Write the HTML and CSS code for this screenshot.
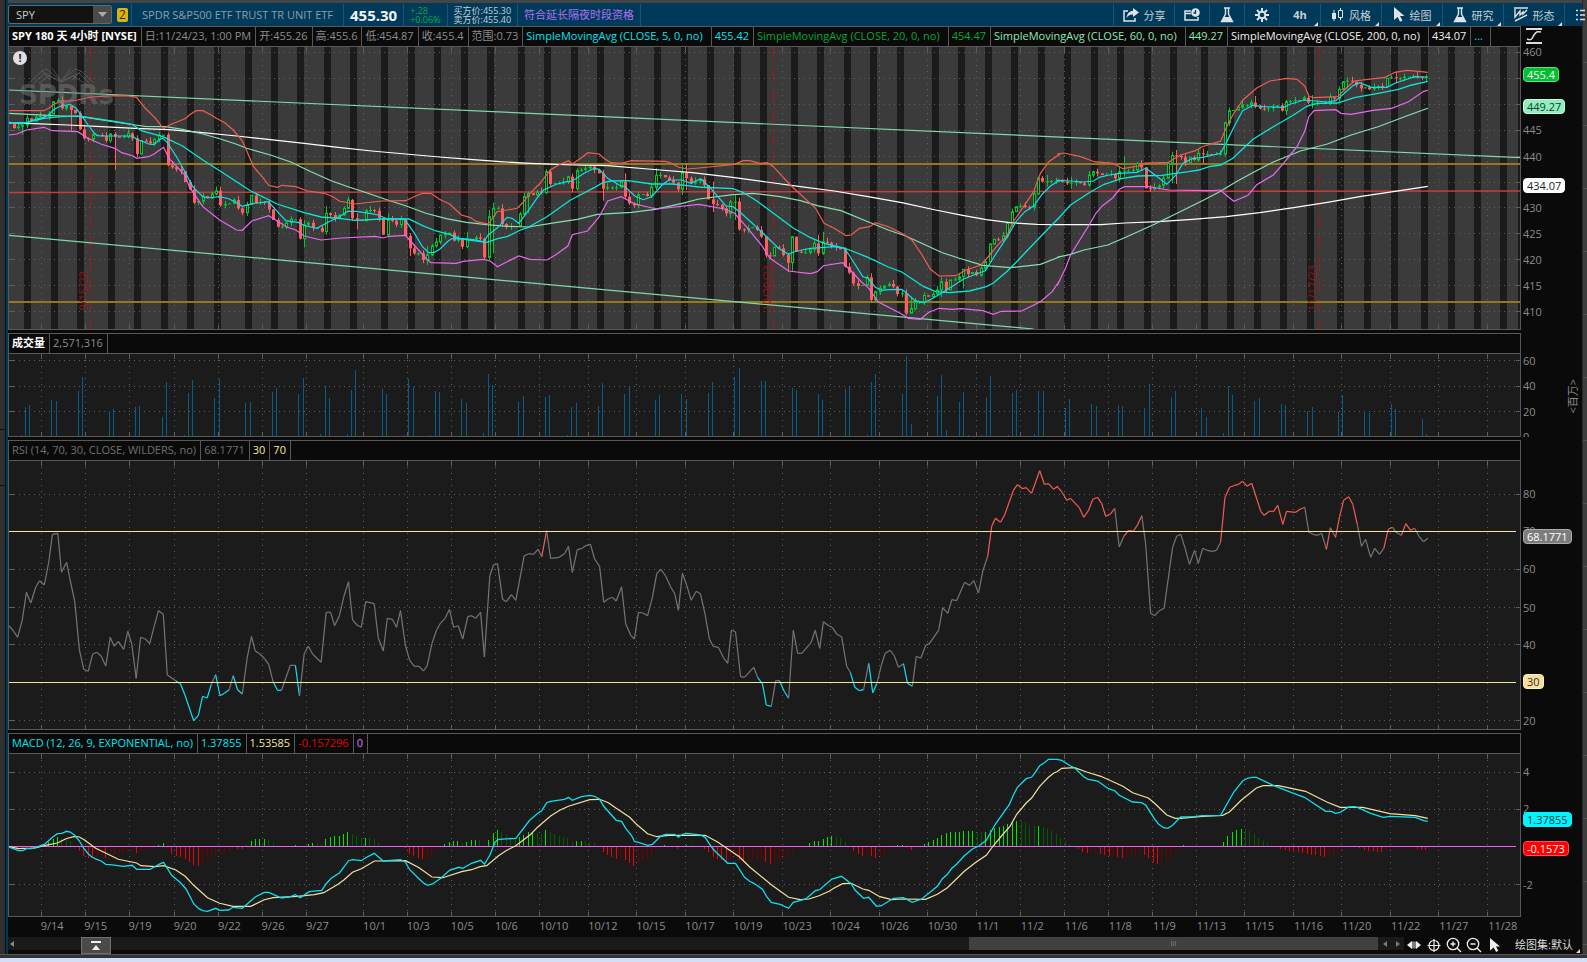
FILE: index.html
```html
<!DOCTYPE html>
<html lang="zh-CN">
<head>
<meta charset="utf-8">
<title>SPY 180 天 4小时</title>
<link rel="stylesheet" href="styles.css">
</head>
<body>
<div class="app">
  <div class="shell">
    <aside class="rail-left"><span class="rail-grip"></span></aside>
    <main class="main">
      <div class="tabline"></div>
      <header class="toolbar">
        <div class="symbol">
          <input class="symbol-input" type="text" value="SPY" aria-label="代码">
          <button class="symbol-drop" aria-label="选择代码"><svg width="9" height="5" viewBox="0 0 9 5"><path d="M0 0h9L4.500 5z" fill="#aaa"/></svg></button>
        </div>
        <button class="link-badge" aria-label="链接 2">2</button>
        <div class="info name">SPDR S&amp;P500 ETF TRUST TR UNIT ETF</div>
        <div class="info last">455.30</div>
        <div class="info change"><span>+.28</span><span>+0.06%</span></div>
        <div class="info quote"><span>买方价:455.30</span><span>卖方价:455.40</span></div>
        <div class="info overnight">符合延长隔夜时段资格</div>
        <nav class="tools">
          <button class="tool wide"><svg width="16" height="14" viewBox="0 0 16 14"><path d="M5 3H1v10h11v-3" fill="none" stroke="#dde3e6" stroke-width="1.500"/><path d="M10 0l6 4.500L10 9V6.500C7 6.300 5 7.500 3.500 10 4 6 6 3 10 2.700z" fill="#dde3e6"/></svg>分享</button>
          <button class="tool" aria-label="日历"><svg width="16" height="14" viewBox="0 0 16 14"><path d="M7 3H1v9h13V9M1 5.500h6" fill="none" stroke="#dde3e6" stroke-width="1.500"/><circle cx="11.500" cy="4.500" r="4.300" fill="#dde3e6"/><path d="M11.500 2v3h-2" fill="none" stroke="#003a5a" stroke-width="1.300"/></svg></button>
          <button class="tool" aria-label="实验"><svg width="14" height="16" viewBox="0 0 14 16"><path d="M4 1h6M5.500 1v6L1.500 14.500h11L8.500 7V1" fill="none" stroke="#dde3e6" stroke-width="1.400"/><path d="M4 10h6l2.500 5h-11z" fill="#dde3e6"/></svg></button>
          <button class="tool" aria-label="设置"><svg width="14" height="14" viewBox="0 0 14 14"><circle cx="7" cy="7" r="3.300" fill="none" stroke="#dde3e6" stroke-width="2"/><path d="M7 0v3M7 11v3M0 7h3M11 7h3M2 2l2.200 2.200M9.800 9.800L12 12M12 2L9.800 4.200M4.200 9.800L2 12" stroke="#dde3e6" stroke-width="2"/></svg></button>
          <button class="tool period corner">4h</button>
          <button class="tool wide corner"><svg width="13" height="14" viewBox="0 0 13 14"><path d="M3 2v11M9.500 0v12" stroke="#dde3e6"/><path d="M1 5h4v6H1z" fill="#dde3e6"/><path d="M7.500 2.500h4v7h-4z" fill="#003a5a" stroke="#dde3e6"/></svg>风格</button>
          <button class="tool wide corner"><svg width="12" height="15" viewBox="0 0 12 15"><path d="M1 0l10.500 9H7l2.500 4.500-2.500 1.300L4.700 10 1 13z" fill="#dde3e6"/></svg>绘图</button>
          <button class="tool wide corner"><svg width="14" height="16" viewBox="0 0 14 16"><path d="M4 1h6M5.500 1v6L1.500 14.500h11L8.500 7V1" fill="none" stroke="#dde3e6" stroke-width="1.400"/><path d="M4 10h6l2.500 5h-11z" fill="#dde3e6"/></svg>研究</button>
          <button class="tool wide corner"><svg width="14" height="15" viewBox="0 0 14 15"><path d="M0 1h14M1 2v8l5-6v4l3-3v2l4-4M1 14l12-6" fill="none" stroke="#dde3e6" stroke-width="1.400"/></svg>形态</button>
          <button class="tool last-tool" aria-label="列表"><svg width="9" height="12" viewBox="0 0 9 12"><path d="M0 1.500h2M4 1.500h5M0 6h2M4 6h5M0 10.500h2M4 10.500h5" stroke="#dde3e6" stroke-width="1.500"/></svg></button>
        </nav>
      </header>

      <div class="charts">
        <section class="panel price">
          <div class="legend">
            <span class="title">SPY 180 天 4小时 [NYSE]</span><span>日:11/24/23, 1:00 PM</span><span>开:455.26</span><span>高:455.6</span><span>低:454.87</span><span>收:455.4</span><span>范围:0.73</span><span class="study cyan">SimpleMovingAvg (CLOSE, 5, 0, no)</span><span class="cyan">455.42</span><span class="study green">SimpleMovingAvg (CLOSE, 20, 0, no)</span><span class="green">454.47</span><span class="study mint">SimpleMovingAvg (CLOSE, 60, 0, no)</span><span class="mint">449.27</span><span class="study white">SimpleMovingAvg (CLOSE, 200, 0, no)</span><span class="white">434.07</span><span class="cyan more">...</span>
          </div>
          <div class="axis-head"><svg width="16" height="18" viewBox="0 0 16 18"><path d="M0 2h16M0 16h16" stroke="#ddd" stroke-width="2"/><path d="M1 12c5 2 5-1 7-4s3-4 7-3" fill="none" stroke="#ddd" stroke-width="1.500"/></svg></div>
          <div class="plot" id="plot-price">
            <div class="watermark">
              <svg width="66" height="16" viewBox="0 0 66 16" fill="none" stroke="#777"><path d="M0 15L13 3l5-2 14 12L46 1l6 2 13 12M5 15L16 5l16 9L50 5l10 10M10 15l10-7 12 6 12-6 11 7M13 3l8 9M52 3l-9 9M23 0l9 13L42 0"/></svg>
              <span>SPDRs</span>
            </div>
            <span class="alert">!</span>
          </div>
          <div class="axis" id="axis-price"></div>
        </section>
        <section class="panel volume">
          <div class="legend"><span class="title">成交量</span><span>2,571,316</span></div>
          <div class="axis-head"></div>
          <div class="plot" id="plot-volume"></div>
          <div class="axis" id="axis-volume"><span class="unit">&lt;百万&gt;</span></div>
        </section>
        <section class="panel rsi">
          <div class="legend"><span class="dim">RSI (14, 70, 30, CLOSE, WILDERS, no)</span><span class="dim">68.1771</span><span class="cream">30</span><span class="cream">70</span></div>
          <div class="axis-head"></div>
          <div class="plot" id="plot-rsi"></div>
          <div class="axis" id="axis-rsi"></div>
        </section>
        <section class="panel macd">
          <div class="legend"><span class="cyan">MACD (12, 26, 9, EXPONENTIAL, no)</span><span class="cyan">1.37855</span><span class="cream">1.53585</span><span class="red">-0.157296</span><span class="violet">0</span></div>
          <div class="axis-head"></div>
          <div class="plot" id="plot-macd"></div>
          <div class="axis" id="axis-macd"></div>
        </section>
      </div>
      <div class="dates" id="dates"></div>
      <footer class="bottom">
        <div class="track">
          <button class="arrow-start" aria-label="向左"><svg width="4" height="6" viewBox="0 0 4 6"><path d="M4 0v6L0 3z" fill="#888"/></svg></button>
          <button class="expand" aria-label="展开"><svg width="10" height="10" viewBox="0 0 10 10"><path d="M0 0h10v2H0zM5 4l4 5H1z" fill="#eee"/></svg></button>
          <span class="gap"></span>
          <span class="thumb">III</span>
          <button class="step" aria-label="上一页"><svg width="4" height="6" viewBox="0 0 4 6"><path d="M4 0v6L0 3z" fill="#777"/></svg></button>
          <button class="step" aria-label="下一页"><svg width="4" height="6" viewBox="0 0 4 6"><path d="M0 0v6l4-3z" fill="#777"/></svg></button>
        </div>
        <div class="zoomers">
          <button aria-label="平移"><svg width="16" height="16" viewBox="0 0 16 16"><path d="M1 8l5-4v8zM15 8l-5-4v8z" fill="#eee"/><path d="M7 4.500v7M9 4.500v7" stroke="#eee"/></svg></button>
          <button aria-label="十字线"><svg width="16" height="16" viewBox="0 0 16 16"><circle cx="8" cy="8.500" r="5" fill="none" stroke="#eee" stroke-width="1.200"/><path d="M8 2v13M1.500 8.500h13" stroke="#eee" stroke-width="1.200"/></svg></button>
          <button aria-label="放大"><svg width="16" height="16" viewBox="0 0 16 16"><circle cx="7" cy="7" r="5.700" fill="none" stroke="#eee" stroke-width="1.300"/><path d="M4.500 7h5M7 4.500v5M11 11l4 4" stroke="#eee" stroke-width="1.400"/></svg></button>
          <button aria-label="缩小"><svg width="16" height="16" viewBox="0 0 16 16"><circle cx="7" cy="7" r="5.700" fill="none" stroke="#eee" stroke-width="1.300"/><path d="M4.500 7h5M11 11l4 4" stroke="#eee" stroke-width="1.400"/></svg></button>
          <button aria-label="指针"><svg width="16" height="16" viewBox="0 0 16 16"><path d="M4 1l10 8.500H10l2.300 4.200-2.200 1.200L7.700 10.500 4 13.500z" fill="#eee"/></svg></button>
          <button class="drawset corner">绘图集:默认</button>
        </div>
      </footer>
    </main>
    <aside class="rail-right"></aside>
  </div>
  <div class="sill"></div>
</div>
<script src="chart.js"></script>
</body>
</html>
```
FILE: styles.css
```css
* { box-sizing: border-box; }

body {
  margin: 0;
  background: #0a0a0a;
  color: #8c8c8c;
  font-family: "Open Sans", "Noto Sans", "Noto Sans CJK SC", sans-serif;
  font-size: 11px;
}

button, input { font: inherit; color: inherit; margin: 0; padding: 0; border: 0; background: none; }
button { display: flex; align-items: center; justify-content: center; }
svg { display: block; flex: none; }

.app { display: flex; flex-direction: column; min-height: 100vh; }
.shell { flex: 1; display: flex; border-bottom: 1px solid #555; }
.sill { height: 7px; background: #333; border-bottom: 4px solid #d3def5; }

.rail-left { width: 8px; background: #303030; border-right: 2px solid #003a5a; box-shadow: inset -1px 0 #0a0a0a; display: flex; align-items: center; }
.rail-grip { width: 5px; height: 57px; border-top: 1px solid #111; border-bottom: 1px solid #111; margin-bottom: 40px; }
.rail-right { width: 5px; background: repeating-linear-gradient(#3c3c3c 0 62px, #555 62px 63px); border-left: 1px solid #2a2a2a; }

.main { flex: 1; min-width: 0; display: flex; flex-direction: column; }
.tabline { height: 3px; background: #454545; }

.toolbar { height: 23px; display: flex; align-items: center; background: #003a5a; white-space: nowrap; overflow: hidden; margin-right: -5px; }
.symbol { width: 104px; height: 19px; display: flex; background: #121212; border: 1px solid #666; border-radius: 2px; }
.symbol-input { flex: 1; min-width: 0; padding-left: 7px; color: #ccc; }
.symbol-drop { width: 18px; background: #4a4a4a; }
.link-badge { width: 11px; height: 14px; margin: 0 3px 0 5px; background: #dcb410; color: #3a2e00; font-size: 12px; border-radius: 2px; }
.info { height: 22px; display: flex; flex-direction: column; justify-content: center; padding: 0 6px; border-right: 1px solid #1b5576; line-height: 10px; }
.name { padding: 0 10px; border-left: 1px solid #1b5576; color: #8f9ea8; }
.last { color: #f2f2f2; font-size: 15px; font-weight: 700; }
.change { color: #00b040; font-size: 9px; line-height: 9px; }
.quote { color: #c8d0d4; font-size: 9px; line-height: 9px; }
.overnight { color: #b070f0; }

.tools { display: flex; margin-left: auto; }
.tool { position: relative; width: 35px; height: 22px; gap: 5px; border-left: 1px solid #1b5576; color: #c8d0d4; }
.wide { width: 61px; }
.period { width: 41px; font-weight: 700; }
.last-tool { width: 23px; padding-right: 2px; justify-content: flex-end; }
.corner { position: relative; }
.corner::after { content: ""; position: absolute; right: 2px; bottom: 0; border: 2px solid; border-color: transparent #ddd #ddd transparent; }

.charts { flex: 1; display: flex; flex-direction: column; gap: 3px; }
.panel { display: grid; grid-template-columns: minmax(0, 1fr) 61px; grid-template-rows: 21px minmax(40px, 1fr); }
.price { flex: 282 1 22px; }
.volume { flex: 82 1 22px; }
.rsi { flex: 268 1 22px; }
.macd { flex: 162 1 22px; }

.legend { display: flex; border: 1px solid #585858; white-space: nowrap; overflow: hidden; line-height: 18px; }
.legend span { padding: 0 4px 0 3px; border-right: 1px solid #585858; }
.legend .study { padding-right: 8px; }
.legend .more { padding-right: 7px; }
.legend .title { color: #fff; font-weight: 700; }
.cyan { color: #00e5f0; }
.green { color: #00a838; }
.mint { color: #8fe8b4; }
.white { color: #eee; }
.cream { color: #f5e6a0; }
.red { color: #e60000; }
.violet { color: #e070ff; }
.dim { color: #707070; }
.axis-head { padding: 1px 0 0 5px; }

.plot { position: relative; border: 1px solid #585858; border-top: 0; background: #1b1b1b; overflow: hidden; }
.plot > svg { position: absolute; inset: 0; width: 100%; height: 100%; }
.watermark { position: absolute; z-index: 1; left: 10px; top: 21px; color: #777; opacity: 0.5; }
.watermark svg { margin-left: 10px; }
.watermark span { display: block; font: 700 26px/22px "DejaVu Sans", sans-serif; }
.alert { position: absolute; z-index: 2; left: 4px; top: 4px; width: 14px; height: 14px; border-radius: 50%; background: #e0e0e0; color: #222; font-weight: 700; line-height: 14px; text-align: center; }
.expiry { position: absolute; z-index: 1; bottom: 18px; color: #9c1010; writing-mode: vertical-rl; transform: translateX(-100%) rotate(180deg); line-height: 14px; }

.axis { position: relative; }
.volume .axis { overflow: hidden; }
.axis-label { position: absolute; left: 2px; height: 14px; line-height: 14px; margin-top: -8px; }
.marker { padding: 0 3px; height: 15px; line-height: 13px; border: 1px solid; border-radius: 4px; z-index: 1; }
.marker.up { background: #00c030; border-color: #60e080; color: #fff; }
.marker.avg { background: #90eec0; border-color: #b8ffdc; color: #17402c; }
.marker.long { background: #fff; border-color: #fff; color: #222; }
.marker.grey { background: #7c7c7c; border-color: #aaa; color: #fff; }
.marker.band { background: #f5dfa0; border-color: #fff0c0; color: #3c3418; }
.marker.aqua { background: #00f5ff; border-color: #00f5ff; color: #003c40; }
.marker.loss { background: #ff0000; border-color: #ff5050; color: #fff; }
.unit { position: absolute; right: 2px; top: 25px; writing-mode: vertical-rl; text-orientation: sideways; transform: rotate(180deg); line-height: 14px; }

.dates { position: relative; height: 20px; margin: 0 61px 0 0; line-height: 18px; }
.dates span { position: absolute; }

.bottom { height: 17px; display: flex; align-items: flex-start; }
.track { flex: 1; height: 13px; display: flex; background: #1a1a1a; }
.arrow-start { width: 73px; justify-content: flex-start; padding-left: 2px; }
.expand { width: 30px; height: 17px; background: #4a4a4a; border: 1px solid #707070; }
.gap { flex: 858; }
.thumb { flex: 409; background: #404040; color: #8a8a8a; font-size: 7px; line-height: 13px; text-align: center; }
.step { width: 13px; height: 13px; }
.zoomers { width: 178px; display: flex; gap: 4px; padding-left: 2px; color: #ddd; }
.zoomers .drawset { flex: 1; white-space: nowrap; line-height: 14px; }
```
FILE: chart.js
```js
// Series are stored in three sections. Each section has its own horizontal
// origin, and its points use a fine unit that is scaled to chart units here.
const ORIGIN = [0, 530, 1057];
const UX = 0.338;
const UY = 1 / 3;
const LEFT = 9, WIDTH = 1511, RIGHT = LEFT + WIDTH;
const NS = "http://www.w3.org/2000/svg";

const sections = (text, top) => text.split("|").flatMap((part, s) =>
  part.trim().split(/\s+/).map(p => {
    const [x, y] = p.split(",").map(Number);
    return [ORIGIN[s] + x * UX, top + y * UY];
  }));
const columns = text => text.split("|").flatMap((part, s) =>
  part.trim().split(/\s+/).map(x => ORIGIN[s] + x * UX));

const el = (parent, name, attrs) => {
  const node = document.createElementNS(NS, name);
  for (const key in attrs) node.setAttribute(key, attrs[key]);
  parent.appendChild(node);
  return node;
};
const canvas = (id, top, height) => {
  const svg = document.createElementNS(NS, "svg");
  svg.setAttribute("viewBox", `${LEFT} ${top} ${WIDTH} ${height}`);
  svg.setAttribute("preserveAspectRatio", "none");
  document.getElementById(id).prepend(svg);
  return svg;
};
const hline = (svg, y, color, width = 1, x2 = RIGHT) =>
  el(svg, "path", { d: `M${LEFT} ${y}H${x2}`, stroke: color, "stroke-width": width });
const line = (svg, pts, color, width = 1.2) =>
  el(svg, "polyline", { points: pts.map(p => p.map(v => v.toFixed(1)).join()).join(" "), fill: "none", stroke: color, "stroke-width": width });

const gridX = columns("123 252 383 516 647 776 907 1076 1205 1335 1465|28 173 315 460 602 747 889 1034 1176 1320 1451|22 152 282 412 554 699 841 986 1128 1273");
const dates = "9/14 9/15 9/19 9/20 9/22 9/26 9/27 10/1 10/3 10/5 10/6 10/10 10/12 10/15 10/17 10/19 10/23 10/24 10/26 10/30 11/1 11/2 11/6 11/8 11/9 11/13 11/15 11/16 11/20 11/22 11/27 11/28".split(" ");

function grid(svg, top, height, rows) {
  const g = el(svg, "g", { stroke: "#5e5e5e", "shape-rendering": "crispEdges" });
  const bottom = top + height;
  gridX.forEach(v => {
    const x = Math.floor(v) + 0.5;
    el(g, "path", { d: `M${x} ${top}V${bottom}`, "stroke-dasharray": "1 5" });
    el(g, "path", { d: `M${x} ${top}v5M${x} ${bottom}v-4` });
  });
  rows.forEach(v => {
    const y = Math.floor(v) + 0.5;
    el(g, "path", { d: `M${LEFT} ${y}H${RIGHT}`, "stroke-dasharray": "1 4" });
    el(g, "path", { d: `M${LEFT} ${y}h5M${RIGHT} ${y}h-4` });
  });
}
function axis(id, top, height, labels) {
  const box = document.getElementById(id);
  labels.forEach(([text, y, kind]) => {
    const s = document.createElement("span");
    s.className = "axis-label" + (kind ? " marker " + kind : "");
    s.textContent = text;
    s.style.top = ((y - top) / height * 100).toFixed(2) + "%";
    box.appendChild(s);
  });
}

/* ---- price ---- */
{
  const top = 47, height = 282;
  const svg = canvas("plot-price", top, height);
  el(svg, "rect", { x: LEFT, y: top, width: WIDTH, height, fill: "#3b3b3b" });
  const bands = columns("71 151 228 320 397 476 553 633 726 802 880 959 1036 1127 1206 1284 1364 1441 1532|41 121 198 278 368 447 524 604 680 772 850 929 1006 1086 1189 1267 1346 1423 1503|22 101 178 257 334 426 503 583 660 740 829 908 987 1077 1157 1234 1312");
  bands.forEach(x => el(svg, "rect", { x: Math.round(x), y: top, width: 7, height, fill: "#1b1b1b" }));
  el(svg, "rect", { x: 1518, y: top, width: 2, height, fill: "#1b1b1b" });
  const rows = [157, 235, 313, 391, 470, 547, 623, 701, 778, 856, 934].map(v => v / 3);
  grid(svg, top, height, rows);

  [["9/15/23", 90.5], ["10/20/23", 773.5], ["11/17/23", 1319.5]].forEach(([text, x]) => {
    el(svg, "path", { d: `M${x} ${top}V${top + height}`, stroke: "#a81414", "stroke-dasharray": "14 7" });
    const s = document.createElement("span");
    s.className = "expiry";
    s.textContent = text;
    s.style.left = ((x - LEFT) / WIDTH * 100).toFixed(2) + "%";
    svg.parentNode.appendChild(s);
  });
  hline(svg, 164, "#94791c", 2);
  hline(svg, 302, "#94791c", 2);
  line(svg, [[LEFT, 192.5], [RIGHT, 191]], "#c83c3c", 1.6);
  line(svg, [[LEFT, 90], [RIGHT, 157.7]], "#7fd8a8");
  line(svg, [[LEFT, 235.3], [1033.6, 329]], "#7fd8a8");

  const closes = [
    [27, 13.02, "372 384 380 375 355 363 352 347 350 342 305 300 325 318 330 340 388 415 418 404 405 408 422 402 410 412 410 400 415 462 422 424 430 418 406 404 496 502 508 514 546 568 608 604 588 594 582 572 616 612 610 600 625 638 614 586 610 606 608 628 660 680 680 668 658 658 716 674 668 684 684 695 640 645 655 645 625 600 655 660 662 632 630 632 655 704 660 662 674 656 708 745 760 760 780 765 738 726 706 702 698 722 718 740 718 718 712 716 772 650 625 625 672 680 678 678 642 590 580"],
    [8, 13, "585 575 578 515 552 550 550 545 530 566 512 510 505 500 510 520 566 562 562 562 545 590 610 616 584 582 588 562 526 525 532 540 548 568 518 535 550 544 538 555 598 612 614 625 640 606 605 688 690 684 682 690 710 766 768 742 745 765 788 710 755 757 757 748 730 760 725 728 738 742 748 800 818 850 858 855 832 900 875 865 858 852 860 882 880 940 926 905 905 886 890 882 870 845 870 840 838 830 808 822 816 826 805 785 732 718 720 708 670 635 620 618 620 622 582 534 545 543 543 542"],
    [3, 12.97, "543 545 550 548 546 550 555 525 515 520 525 524 522 535 515 512 512 510 490 502 565 568 562 556 535 490 466 468 472 488 472 480 460 462 462 463 462 462 368 332 330 322 315 315 308 320 326 328 325 320 316 332 305 303 300 300 293 308 308 308 308 310 292 296 268 245 242 245 255 265 262 268 262 258 260 235 232 235 235 230 230 228 232 234 232"]
  ];
  // Wicks that reach well beyond the body, by section and bar: [high, low]
  const wicks = [
    { 3: [368, 404], 14: [322, 392], 24: [396, 510], 48: [560, 620], 67: [660, 742], 72: [618, 704], 79: [640, 688], 77: [590, 615], 86: [640, 712], 91: [700, 768], 95: [738, 795], 104: [695, 745], 109: [630, 780], 110: [608, 760], 118: [575, 640] },
    { 3: [508, 582], 10: [505, 572], 16: [510, 602], 21: [520, 598], 28: [505, 570], 34: [495, 585], 35: [490, 570], 41: [545, 636], 45: [600, 655], 46: [585, 660], 58: [760, 816], 59: [708, 812], 65: [705, 768], 66: [695, 765], 77: [820, 906], 85: [868, 945], 86: [890, 938], 93: [830, 892], 98: [812, 866], 104: [730, 790], 117: [525, 560] },
    { 3: [530, 566], 14: [500, 545], 15: [468, 530], 21: [555, 575], 26: [455, 550], 27: [450, 552], 33: [446, 490], 45: [288, 325], 52: [300, 345], 58: [285, 325], 66: [232, 265], 77: [214, 250] }
  ];
  let prev = 368;
  closes.forEach(([start, pitch, list], s) => {
    list.split(" ").map(Number).forEach((close, i) => {
      const open = prev;
      prev = close;
      const up = close <= open;
      const color = up ? "#00c832" : "#ff5e5e";
      const x = Math.round(ORIGIN[s] + (start + i * pitch) * UX) + 0.5;
      const hi = Math.min(open, close) * UY, lo = Math.max(open, close) * UY;
      const extra = wicks[s][i];
      const h = extra ? Math.min(hi, extra[0] * UY) : hi - (i * 7 % 5);
      const l = extra ? Math.max(lo, extra[1] * UY) : lo + (i * 11 % 5) * 0.8;
      el(svg, "path", { d: `M${x} ${h.toFixed(1)}V${l.toFixed(1)}`, stroke: color });
      const body = Math.max(1, lo - hi);
      el(svg, "rect", up && body > 2
        ? { x: x - 1, y: hi, width: 2, height: body, fill: "#1b1b1b", stroke: color }
        : { x: x - 1.5, y: hi, width: 3, height: body, fill: color });
    });
  });

  line(svg, sections("27,368 100,371 200,375 300,380 400,385 500,389 600,398 700,408 800,419 900,430 1000,442 1100,453 1200,462 1300,471 1400,479 1480,485 1568,490|0,490 130,495 230,497 350,507 480,518 600,532 700,546 800,560 900,573 1000,590 1100,608 1200,630 1280,646 1350,659 1420,668 1500,673 1568,674|0,674 130,674 200,669 300,665 400,658 500,650 600,638 700,623 800,607 900,589 1000,574 1097,559", 0), "#fff");
  line(svg, sections("27,340 100,344 180,348 240,350 340,366 400,375 430,379 490,380 540,388 600,402 650,416 700,433 730,445 800,465 860,486 920,515 980,542 1030,560 1080,577 1140,598 1200,617 1260,640 1320,656 1380,667 1440,674 1500,679 1568,681|0,680 80,667 140,658 200,643 300,637 370,628 450,610 500,597 600,584 660,580 740,590 800,602 850,617 920,632 1000,665 1060,690 1110,707 1170,735 1220,758 1270,775 1340,796 1420,803 1510,793 1568,770|0,772 40,763 80,750 150,735 200,713 290,672 370,632 430,602 480,576 530,545 590,512 640,486 720,453 800,432 870,405 950,380 1040,346 1097,325", 0), "#86e0b0");
  line(svg, sections("27,405 50,402 78,390 130,382 155,392 230,395 260,415 300,433 340,445 360,458 392,467 404,475 440,470 456,462 484,442 500,475 547,525 560,560 600,620 650,660 700,690 717,691 745,663 795,647 820,663 850,682 875,690 900,708 950,720 1010,714 1110,709 1134,714 1150,709 1199,706 1225,735 1260,775 1275,788 1350,790 1370,784 1430,778 1450,783 1472,800 1500,785 1535,768 1568,778|0,778 50,780 75,765 112,738 125,704 170,693 205,650 230,603 270,590 310,612 375,627 500,613 575,627 605,640 640,680 685,735 710,775 765,813 830,821 850,815 868,797 925,788 950,813 980,845 1000,862 1030,905 1095,940 1120,955 1155,958 1180,937 1210,925 1250,928 1275,926 1340,932 1370,943 1395,934 1455,933 1480,920 1510,905 1545,875 1568,840|0,857 25,805 40,765 95,675 115,640 135,617 165,593 185,568 200,560 270,560 330,570 460,572 484,570 500,585 523,604 565,586 590,555 640,525 670,490 690,465 710,440 733,393 745,350 760,332 825,329 840,340 870,343 935,331 990,325 1040,305 1085,274 1097,271", 0), "#e868f0");
  line(svg, sections("27,332 130,332 144,325 160,312 180,305 230,300 270,291 340,287 380,288 404,292 430,325 460,355 484,386 500,376 550,355 560,345 580,332 600,332 625,345 640,355 665,368 690,390 715,420 729,450 750,500 780,535 795,556 820,562 835,556 875,560 910,573 960,580 985,590 1005,604 1050,612 1130,603 1200,602 1225,590 1250,580 1275,580 1300,598 1330,612 1365,645 1390,652 1410,665 1445,672 1470,635 1530,625 1545,610 1568,580|0,580 30,550 60,510 85,495 114,482 125,492 150,475 172,458 205,462 218,475 240,488 270,490 300,482 400,484 415,488 440,502 465,507 500,504 605,493 630,482 650,482 680,490 702,488 720,500 770,555 845,625 870,670 900,685 935,707 950,705 975,685 1005,680 1022,668 1060,680 1100,700 1130,720 1160,765 1185,808 1210,828 1260,827 1290,810 1335,795 1360,765 1380,740 1412,705 1430,665 1460,620 1490,575 1510,520 1535,485 1568,462|0,462 20,459 70,470 110,485 165,490 195,506 240,498 260,489 330,487 365,465 410,452 430,440 484,423 500,385 520,345 550,300 590,265 630,243 680,235 710,238 733,258 745,288 760,293 830,290 860,260 880,243 970,232 1000,217 1035,211 1070,214 1097,217", 0), "#f25c54");
  line(svg, sections("27,368 78,367 130,355 180,350 230,348 260,352 340,364 390,373 420,393 482,410 540,438 600,480 650,512 742,573 820,612 900,638 950,651 1010,656 1050,661 1130,657 1210,657 1250,677 1290,693 1330,703 1360,715 1400,719 1440,727 1475,715 1500,710 1540,690 1568,680|0,679 50,650 120,600 190,563 215,548 240,543 290,542 360,552 420,552 460,556 500,561 600,566 630,577 670,602 720,640 780,685 830,713 870,730 930,744 1000,772 1060,801 1100,816 1165,860 1200,875 1240,878 1300,873 1350,860 1370,850 1410,815 1440,785 1510,710 1568,650|0,660 40,615 100,575 140,553 190,536 240,528 310,526 390,515 420,510 450,500 484,495 520,475 580,418 640,380 700,345 740,318 770,310 830,309 880,293 950,280 1010,268 1050,255 1097,244", 0), "#08ead4", 1.3);
  line(svg, sections("27,366 60,372 78,368 105,358 130,352 144,345 160,328 180,318 208,313 225,325 245,352 261,375 275,395 287,407 300,408 380,408 392,408 404,418 417,422 440,432 456,434 470,420 482,415 495,428 521,468 547,515 570,560 600,590 612,594 650,590 677,596 700,608 716,619 750,610 794,605 807,620 846,662 885,668 898,676 937,685 976,664 1002,652 1028,634 1054,634 1093,640 1119,645 1145,656 1197,658 1223,695 1250,740 1268,758 1285,757 1301,748 1327,722 1340,715 1379,719 1431,726 1444,705 1470,685 1500,652 1515,655 1535,670 1550,650 1568,625|0,625 20,595 40,570 80,552 110,545 125,543 160,520 190,505 205,508 230,535 265,556 281,560 310,588 335,599 360,590 390,556 411,540 450,540 476,550 505,536 530,560 580,618 600,620 620,635 660,672 710,720 735,745 765,763 780,756 805,750 830,745 900,740 930,745 944,765 985,830 1000,835 1022,862 1040,871 1061,869 1100,868 1113,878 1139,902 1165,908 1190,896 1217,880 1243,863 1282,838 1320,822 1347,812 1373,770 1412,710 1438,665 1464,635 1490,618 1516,582 1540,558 1568,540|0,541 40,543 80,546 108,543 125,532 155,525 184,520 237,517 263,505 290,525 325,553 350,527 373,490 400,476 430,472 484,460 500,430 520,388 549,332 580,316 610,320 670,322 690,313 730,300 800,306 825,302 850,280 875,257 895,248 930,262 976,262 1000,250 1028,240 1060,230 1097,231", 0), "#10dff0");

  axis("axis-price", top, height, [0, 1, 3, 4, 6, 7, 8, 9, 10].map(i => [460 - 5 * i, rows[i] + 0.5])
    .concat([["455.4", 75, "up"], ["449.27", 107, "avg"], ["434.07", 185, "long"]]));
}

/* ---- volume ---- */
{
  const top = 354, height = 82;
  const svg = canvas("plot-volume", top, height);
  const rows = [360.6, 386.3, 411.4];
  grid(svg, top, height, rows);
  sections("63,331 75,246 87,240 152,225 167,228 232,198 244,156 323,258 335,252 400,246 412,243 480,276 492,171 545,331 557,204 569,165 634,219 649,162 726,234 741,231 806,201 818,189 883,207 897,159 948,328 963,183 974,219 1028,328 1039,195 1051,135 1131,192 1143,207 1196,331 1208,162 1223,186 1273,331 1288,198 1300,201 1365,222 1380,234 1430,324 1445,147 1457,180 1533,231 1548,213|45,216 57,210 110,331 122,246 137,234 187,331 202,243 214,174 279,207 294,186 371,225 383,210 448,207 462,222 528,204 540,171 604,156 619,129 684,168 697,168 776,189 788,195 853,207 865,225 933,192 945,186 998,331 1010,171 1022,147 1102,207 1113,93 1128,297 1205,213 1217,150 1232,315 1270,231 1282,201 1297,331 1335,331 1350,216 1362,153 1415,331 1427,204 1439,195 1492,327 1504,198 1519,198|25,249 37,222 102,237 116,243 181,240 193,243 258,249 273,177 338,216 350,198 427,249 442,276 492,324 507,183 519,210 584,228 599,219 664,237 676,240 741,258 755,246 832,261 844,210 909,258 924,264 989,237 1001,252 1081,282 1093,327", 325)
    .forEach(([x, y]) => el(svg, "rect", { x: Math.floor(x), y: Math.floor(y), width: 1, height: top + height - Math.floor(y), fill: "#0a5c86" }));
  axis("axis-volume", top, height, [["60", 362], ["40", 387], ["20", 412], ["0", 437]]);
}

/* ---- RSI ---- */
{
  const top = 461, height = 268;
  const svg = canvas("plot-rsi", top, height);
  grid(svg, top, height, [494.3, 569.3, 607.3, 644.7, 720.7]);
  const upper = 531.5, lower = 682.5;
  const pts = sections("27,903 40,918 52,937 66,885 78,802 91,834 106,786 117,767 131,780 144,712 155,628 171,625 182,742 197,712 208,768 221,828 235,975 248,1033 261,1039 274,988 286,982 299,993 313,1023 326,937 338,964 350,949 366,973 378,919 390,958 403,1060 416,937 430,942 443,956 456,905 469,857 483,868 495,1050 521,1068 534,1077 547,1110 573,1187 587,1171 599,1114 613,1119 625,1078 638,1049 651,1112 664,1105 678,1094 690,1052 703,1094 717,1107 731,1000 744,934 755,978 768,986 782,1000 795,1018 808,1070 821,1096 833,1096 846,1058 859,1021 874,1021 886,1113 900,986 912,964 925,988 950,1012 965,862 978,862 990,902 1004,872 1018,812 1031,770 1043,884 1056,900 1069,907 1082,830 1107,836 1119,938 1134,978 1146,880 1161,883 1173,907 1185,857 1199,960 1212,1006 1226,1024 1240,1024 1253,1038 1264,1022 1278,955 1292,914 1303,895 1317,880 1330,853 1342,907 1356,902 1369,942 1384,875 1395,872 1407,880 1422,862 1433,996 1449,752 1460,720 1472,716 1487,823 1498,830 1513,809 1526,826 1551,692 1565,686|10,688 24,673 35,695 49,617 61,700 86,697 102,686 114,664 125,742 140,674 152,671 167,661 179,658 191,702 206,724 218,832 232,821 244,817 255,828 271,785 283,896 298,931 309,942 321,862 335,864 348,872 362,817 375,745 387,733 401,752 416,785 428,806 439,856 451,745 463,779 477,826 492,799 504,806 518,868 531,943 542,964 557,967 572,997 585,1015 596,916 608,920 623,1055 634,1057 662,1027 674,1058 688,1077 699,1140 714,1144 727,1067 738,1067 752,1099 765,1120 779,916 792,985 804,985 832,952 844,916 857,970 868,890 882,901 895,908 908,928 922,935 937,1024 948,1043 961,1087 975,1097 987,1094 1002,1015 1014,1103 1026,1076 1040,1019 1051,985 1066,976 1078,993 1090,1027 1105,1016 1117,1075 1131,1084 1143,994 1156,1000 1171,961 1182,955 1209,916 1221,848 1236,865 1248,824 1262,827 1286,772 1300,781 1313,767 1327,804 1340,737 1354,694 1366,604 1377,580 1392,592 1404,570 1430,497 1442,479 1457,491 1468,488 1484,505 1508,437 1522,478 1534,476 1549,493 1561,484|0,484 14,500 29,526 40,520 66,548 79,577 93,557 106,523 120,517 132,535 144,574 159,566 171,550 184,666 197,635 211,617 226,618 237,602 251,572 262,655 277,865 289,872 303,857 317,850 342,667 354,634 366,628 379,670 392,718 407,676 418,715 431,670 444,676 458,679 472,676 484,652 497,517 511,487 523,482 537,478 549,469 563,484 576,475 603,559 613,571 628,559 641,559 653,541 668,598 679,559 706,562 719,553 733,547 745,622 758,628 771,631 783,625 797,673 809,608 824,637 836,575 848,526 863,515 875,538 889,601 901,664 913,643 928,697 940,670 954,688 967,670 980,613 993,607 1003,622 1019,631 1032,596 1046,616 1058,610 1071,634 1084,650 1097,640", 325);
  for (let i = 1; i < pts.length; i++) {
    const y = pts[i][1];
    line(svg, [pts[i - 1], pts[i]], y < upper ? "#f25c54" : y > lower ? "#10dff0" : "#757575", 1.2);
  }
  hline(svg, upper, "#f5e49a", 1, 1516);
  hline(svg, lower, "#f5e49a", 1, 1516);
  axis("axis-rsi", top, height, [["80", 495], ["70", 532], ["60", 570], ["50", 608], ["40", 645], ["20", 721], ["68.1771", 537, "grey"], ["30", 681, "band"]]);
}

/* ---- MACD ---- */
{
  const top = 754, height = 162, zero = 846.5;
  const svg = canvas("plot-macd", top, height);
  grid(svg, top, height, [772.3, 809.3, 884.3]);
  const macd = sections("27,615 55,626 68,626 78,620 92,620 105,616 130,608 143,597 156,585 170,575 183,574 197,568 208,570 221,580 235,597 247,618 261,635 272,645 286,652 299,657 313,667 326,668 365,673 391,670 404,682 444,682 470,667 484,661 508,700 534,722 550,740 573,785 588,800 600,806 614,808 638,799 651,805 676,804 690,796 717,799 755,765 782,751 795,751 833,768 860,764 874,758 888,767 915,749 952,745 965,725 980,709 1005,692 1031,656 1043,653 1069,656 1082,647 1107,634 1134,657 1185,653 1199,660 1212,683 1238,709 1253,723 1265,730 1280,726 1305,708 1330,685 1357,676 1369,679 1395,664 1422,655 1433,667 1449,640 1465,600 1475,592 1526,589 1567,535|0,534 25,512 35,506 49,482 61,478 102,472 114,466 125,475 152,464 177,460 191,463 206,472 218,493 255,535 271,538 283,559 300,580 309,598 321,601 348,610 362,607 388,581 401,577 428,577 439,586 451,577 465,574 504,579 518,586 530,604 542,622 557,637 585,664 608,664 635,706 650,718 662,724 688,742 701,765 714,781 740,787 765,799 779,781 816,771 844,746 857,743 893,711 922,703 950,725 962,745 987,769 1002,766 1025,793 1040,791 1075,769 1105,767 1131,781 1159,771 1205,733 1220,710 1235,697 1248,679 1262,667 1285,641 1310,620 1327,613 1350,595 1377,546 1418,488 1430,460 1442,436 1468,410 1484,406 1495,391 1508,371 1522,362 1534,352 1558,352|0,352 14,355 40,372 52,377 80,405 93,412 120,417 152,440 171,446 184,460 224,480 250,482 263,490 288,530 300,546 315,557 328,559 342,550 366,525 405,524 430,521 484,520 523,450 549,417 565,408 578,406 590,406 640,430 700,454 732,466 795,508 812,508 824,514 838,511 863,495 878,494 889,496 928,514 965,526 985,523 1060,526 1085,536 1097,538", 642);
  const signal = sections("27,614 55,620 105,618 130,611 170,603 195,590 221,583 235,585 250,594 283,619 350,652 404,663 417,671 460,674 484,671 520,684 548,703 573,730 614,767 650,784 690,793 742,793 782,773 808,767 880,763 930,758 958,752 1000,727 1018,713 1043,691 1069,680 1108,657 1200,656 1240,677 1278,705 1310,707 1366,689 1395,683 1420,674 1440,671 1475,641 1497,626 1526,611 1567,580|0,579 24,554 61,522 88,505 114,493 177,473 206,472 232,482 255,499 295,526 315,547 348,575 375,584 410,580 518,580 555,600 620,645 650,675 714,728 765,766 800,773 825,771 855,761 885,748 900,738 925,725 950,724 985,741 1002,745 1035,764 1070,773 1100,771 1170,772 1205,757 1235,737 1285,688 1320,660 1350,640 1370,612 1400,576 1420,553 1440,517 1468,483 1484,468 1508,433 1534,406 1550,393|0,389 14,379 52,377 90,391 130,403 195,433 224,452 270,468 288,483 325,519 350,529 365,529 430,523 490,520 510,510 545,475 590,438 610,431 655,431 735,448 800,481 838,496 905,496 985,515 1060,521 1097,529", 642);
  const at = (pts, x) => {
    let i = 1;
    while (i < pts.length - 1 && pts[i][0] < x) i++;
    const [a, b] = [pts[i - 1], pts[i]];
    return a[1] + (b[1] - a[1]) * (x - a[0]) / (b[0] - a[0] || 1);
  };
  let last = 0;
  for (let i = 0; i < 323; i++) {
    const x = 9.1 + i * 4.4;
    const diff = at(signal, x) - at(macd, x);
    const growing = Math.abs(diff) >= Math.abs(last);
    last = diff;
    el(svg, "rect", {
      x: Math.floor(x), y: Math.round(diff > 0 ? zero - diff : zero), width: 1,
      height: Math.max(1, Math.round(Math.abs(diff))),
      fill: diff > 0 ? (growing ? "#00e600" : "#005c00") : (growing ? "#f00000" : "#700000")
    });
  }
  hline(svg, zero, "#f060f0", 1, 1516);
  line(svg, signal, "#f0e0a0", 1.2);
  line(svg, macd, "#10dff0", 1.3);
  axis("axis-macd", top, height, [["4", 773], ["2", 810], ["-2", 885], ["1.37855", 820, "aqua"], ["-0.1573", 848, "loss"]]);
}

/* ---- dates ---- */
gridX.forEach((x, i) => {
  const s = document.createElement("span");
  s.textContent = dates[i];
  s.style.left = ((x - LEFT) / WIDTH * 100).toFixed(2) + "%";
  document.getElementById("dates").appendChild(s);
});
```
